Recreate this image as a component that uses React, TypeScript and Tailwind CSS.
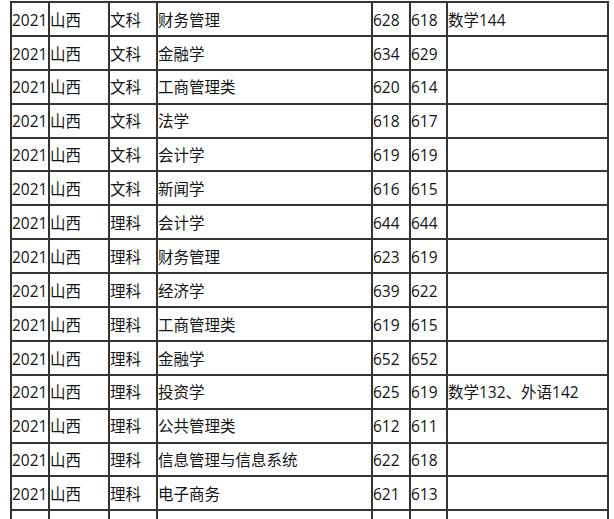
import React from "react";

type Row = [string, string, string, string, string, string, string];

const rows: Row[] = [
  ["2021", "山西", "文科", "财务管理", "628", "618", "数学144"],
  ["2021", "山西", "文科", "金融学", "634", "629", ""],
  ["2021", "山西", "文科", "工商管理类", "620", "614", ""],
  ["2021", "山西", "文科", "法学", "618", "617", ""],
  ["2021", "山西", "文科", "会计学", "619", "619", ""],
  ["2021", "山西", "文科", "新闻学", "616", "615", ""],
  ["2021", "山西", "理科", "会计学", "644", "644", ""],
  ["2021", "山西", "理科", "财务管理", "623", "619", ""],
  ["2021", "山西", "理科", "经济学", "639", "622", ""],
  ["2021", "山西", "理科", "工商管理类", "619", "615", ""],
  ["2021", "山西", "理科", "金融学", "652", "652", ""],
  ["2021", "山西", "理科", "投资学", "625", "619", "数学132、外语142"],
  ["2021", "山西", "理科", "公共管理类", "612", "611", ""],
  ["2021", "山西", "理科", "信息管理与信息系统", "622", "618", ""],
  ["2021", "山西", "理科", "电子商务", "621", "613", ""],
  ["", "", "", "", "", "", ""],
];

const App: React.FC = () => {
  return (
    <div className="w-[614px] h-[519px] overflow-hidden bg-white pl-[10px] pt-px">
      <div
        className="grid grid-cols-[38px_60px_48px_215px_38px_37px_161px] w-fit border-l-2 border-t-2 border-[#353535] text-[15.5px] text-[#141414]"
        style={{ fontFamily: '"Open Sans", "Noto Sans CJK SC", sans-serif' }}
      >
        {rows.map((row, i) =>
          row.map((cell, j) => (
            <div
              key={`${i}-${j}`}
              className="h-[33.9px] flex items-center pt-[3px] border-r-2 border-b-2 border-[#353535] whitespace-nowrap overflow-hidden leading-none"
            >
              {cell}
            </div>
          ))
        )}
      </div>
    </div>
  );
};

export default App;
